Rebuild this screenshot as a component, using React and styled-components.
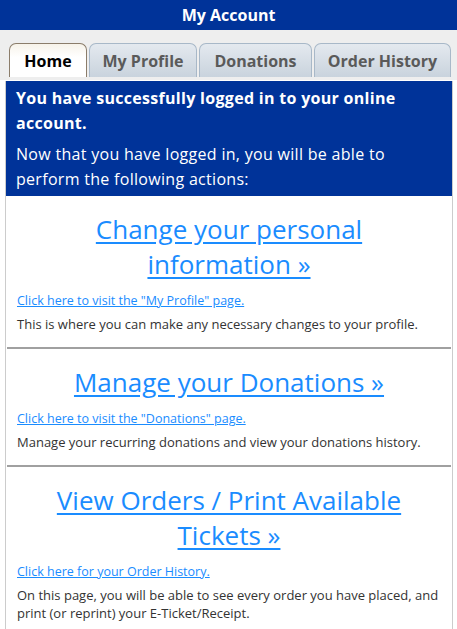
import styled, { createGlobalStyle } from "styled-components";

const GlobalStyle = createGlobalStyle`
  body {
    margin: 0;
    background: #ffffff;
    font-family: "Open Sans", "Liberation Sans", sans-serif;
  }
`;

const Header = styled.div`
  height: 30px;
  background-color: #003399;
  color: #ffffff;
  font-size: 16px;
  font-weight: bold;
  display: flex;
  align-items: center;
  justify-content: center;
`;

const TabBar = styled.div`
  background-color: #eeeeee;
  padding: 13px 6px 3px 9px;
  display: flex;
  gap: 2px;
`;

const Tab = styled.div`
  height: 34px;
  box-sizing: border-box;
  padding: 0;
  white-space: nowrap;
  display: flex;
  align-items: center;
  justify-content: center;
  flex: ${(p) => p.$grow};
  border: 1px solid ${(p) => (p.$active ? "#8b7d6b" : "#a8b8c8")};
  border-bottom: none;
  border-radius: 7px 7px 0 0;
  font-size: 16px;
  font-weight: bold;
  color: ${(p) => (p.$active ? "#000000" : "#5a5a5a")};
  background: ${(p) =>
    p.$active
      ? "linear-gradient(#f7f3ea, #ffffff 40%, #ffffff)"
      : "linear-gradient(#e4e9ef, #c9d3dd)"};
`;

const Panel = styled.div`
  margin: 1px 4px 0 5px;
  border-left: 1px solid #cccccc;
  border-right: 1px solid #cccccc;
  background: #ffffff;
`;

const Notice = styled.div`
  background-color: #003399;
  color: #ffffff;
  padding: 5px 10px 4px;
  font-size: 16px;
  line-height: 25px;
  letter-spacing: 0.3px;
`;

const NoticeTitle = styled.p`
  margin: 0 0 6px;
  font-weight: bold;
`;

const NoticeText = styled.p`
  margin: 0;
`;

const Section = styled.div`
  padding: 16px 10px 14px;
  border-bottom: ${(p) => (p.$last ? "none" : "2px solid #a0a0a0")};
  margin: 0 1px;
`;

const BigLink = styled.a`
  display: block;
  text-align: center;
  color: #1a8cff;
  font-size: 26px;
  line-height: 35px;
  text-decoration: underline;
  text-underline-offset: 3px;
  padding: 0 30px;
  margin-bottom: 10px;
`;

const SmallLink = styled.a`
  display: block;
  color: #1a8cff;
  font-size: 12.5px;
  line-height: 18px;
  text-decoration: underline;
  margin-bottom: 5px;
`;

const Description = styled.p`
  margin: 0;
  font-size: 13px;
  line-height: 18px;
  color: #333333;
`;

const tabs = [
  { label: "Home", grow: "0 0 78px", active: true },
  { label: "My Profile", grow: "0 0 108px" },
  { label: "Donations", grow: "0 0 113px" },
  { label: "Order History", grow: "1 1 auto" },
];

const actions = [
  {
    title: "Change your personal information »",
    link: 'Click here to visit the "My Profile" page.',
    text: "This is where you can make any necessary changes to your profile.",
  },
  {
    title: "Manage your Donations »",
    link: 'Click here to visit the "Donations" page.',
    text: "Manage your recurring donations and view your donations history.",
  },
  {
    title: "View Orders / Print Available Tickets »",
    link: "Click here for your Order History.",
    text: "On this page, you will be able to see every order you have placed, and print (or reprint) your E-Ticket/Receipt.",
  },
];

const App = () => {
  return (
    <>
      <GlobalStyle />
      <Header>My Account</Header>
      <TabBar>
        {tabs.map((tab) => (
          <Tab key={tab.label} $active={tab.active} $grow={tab.grow}>
            {tab.label}
          </Tab>
        ))}
      </TabBar>
      <Panel>
        <Notice>
          <NoticeTitle>You have successfully logged in to your online account.</NoticeTitle>
          <NoticeText>
            Now that you have logged in, you will be able to perform the following actions:
          </NoticeText>
        </Notice>
        {actions.map((action, i) => (
          <Section key={action.title} $last={i === actions.length - 1}>
            <BigLink href="#">{action.title}</BigLink>
            <SmallLink href="#">{action.link}</SmallLink>
            <Description>{action.text}</Description>
          </Section>
        ))}
      </Panel>
    </>
  );
};

export default App;
